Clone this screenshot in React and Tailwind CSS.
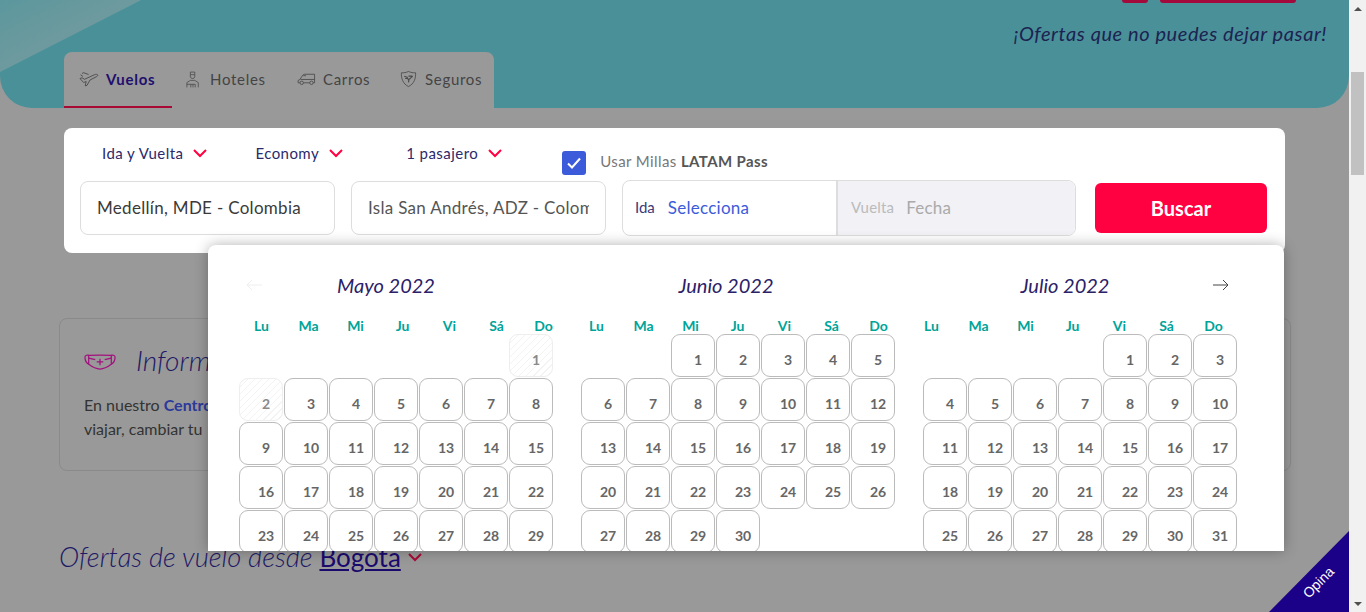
import React from 'react';

const font = "font-['Lato','Open_Sans',sans-serif]";
const weekdays = ['Lu', 'Ma', 'Mi', 'Ju', 'Vi', 'Sá', 'Do'];

// May stops at 29: the last row is below the fold of the popover
const months = [
    { title: 'Mayo 2022', days: 29, start: 6, disabled: [1, 2], titleClass: 'w-[294px]', weekClass: '-ml-[1px]' },
    { title: 'Junio 2022', days: 30, start: 2, disabled: [], titleClass: 'w-[290px]', weekClass: '-ml-[8px]' },
    { title: 'Julio 2022', days: 31, start: 4, disabled: [], titleClass: 'w-[284px]', weekClass: '-ml-[15px]' },
];

function Chevron({ className }) {
    return (
        <svg viewBox="0 0 16 10" className={className} fill="none" stroke="currentColor" strokeWidth="2">
            <path d="M2 2l6 6 6-6" />
        </svg>
    );
}

function PlaneIcon() {
    return (
        <svg viewBox="0 0 20 16" className="w-[20px] h-[16px] text-[#4a4a4a]" fill="none" stroke="currentColor" strokeWidth="0.9">
            <path d="M1 7.5l2-.8 2.5 1.6 10-4.6c1.400-.6 3-.4 3.300.3.2.6-.5 1.200-1.600 1.800L11 9l-3 5.400-1.800.5 1-4.400-2.600 1-3.600-4z" />
            <path d="M3 2.500l1.600-.8 5 1.800M1.500 3.800l2.400 1.600" />
        </svg>
    );
}

function BellboyIcon() {
    return (
        <svg viewBox="0 0 16 20" className="w-[14px] h-[19px] text-[#4a4a4a]" fill="none" stroke="currentColor" strokeWidth="0.9">
            <path d="M5 1.500h5v3H5zM5 4.500v2.500a2.600 2.600 0 005 0V4.500" />
            <path d="M1 19v-5.500L5 11h5l4 2.500V19M1 15.500h9.500v3.500M5.500 15.500V19M8 15.500V19" />
        </svg>
    );
}

function CarIcon() {
    return (
        <svg viewBox="0 0 20 14" className="w-[19px] h-[14px] text-[#4a4a4a]" fill="none" stroke="currentColor" strokeWidth="0.9">
            <path d="M3 11H1.200V8.500L3 7.600 6 3c.4-.6 1-1 1.800-1H18.500v9H17M7 11h6.500" />
            <path d="M3.800 7.500h14.700M6.500 3.500h3" />
            <circle cx="5" cy="11" r="1.800" />
            <circle cx="15.200" cy="11" r="1.800" />
        </svg>
    );
}

function ShieldIcon() {
    return (
        <svg viewBox="0 0 18 18" className="w-[17px] h-[18px] text-[#4a4a4a]" fill="none" stroke="currentColor" strokeWidth="0.9">
            <path d="M9 1c2.400 1.200 5 1.600 7.500 1.400.4 5.800-1.600 11.800-7.500 14.600C3.100 14.200 1.100 8.200 1.500 2.400 4 2.600 6.600 2.200 9 1z" />
            <path d="M4.500 6l3 1.200L9 10l4.500-4M5.500 8.500h3M9 6h4M9.500 9.500l-.5 3" strokeWidth="1.200" />
        </svg>
    );
}

function MaskIcon() {
    return (
        <svg viewBox="0 0 34 20" className="mt-[3px] w-[32px] h-[19px] text-[#a3107e]" fill="none" stroke="currentColor" strokeWidth="1.300">
            <path d="M5 3.500c8-.3 16-.3 24 0V13c-4 3-8 5-12 5s-8-2-12-5z" />
            <path d="M5 3.500C2.500 3 1 3.500 1 5.500c0 3 1.500 6 4 7.500M29 3.500c2.500-.5 4 0 4 2 0 3-1.500 6-4 7.500" />
            <path d="M5 6.500l7 1.500M29 6.500l-7 1.500M17 7v7M13.500 10.500h7" />
        </svg>
    );
}

function Tab({ icon, label, active, className }) {
    return (
        <div className={`flex items-center h-full border-b-2 ${active ? 'border-[#a80a35]' : 'border-transparent'} ${className}`}>
            {icon}
            <span className={`text-[15px] tracking-[0.7px] ${active ? 'font-bold text-[#1f0f6e] ml-[7px]' : 'text-[#444444]'}`}>{label}</span>
        </div>
    );
}

function Select({ label, className }) {
    return (
        <div className={`flex items-center text-[15px] tracking-[0.45px] text-[#2b2a6b] ${className}`}>
            <span className="whitespace-nowrap">{label}</span>
            <Chevron className="ml-[9px] w-[16px] h-[10px] text-[#ff0040]" />
        </div>
    );
}

function Month({ month }) {
    const cells = [];
    for (let i = 0; i < month.start; i++) cells.push(<div key={`b${i}`} />);
    for (let d = 1; d <= month.days; d++) {
        const off = month.disabled.includes(d);
        cells.push(
            <div
                key={d}
                className={`flex items-center justify-center pl-[10px] pt-[7px] rounded-[9px] border text-[14px] font-bold ${
                    off
                        ? 'border-[#eeeeee] text-[#8a8a8a] bg-[repeating-linear-gradient(135deg,#f3f3f3_0px,#f3f3f3_1px,#ffffff_1px,#ffffff_5px)]'
                        : 'border-[#bbbbbb] text-[#666666]'
                }`}
            >
                {d}
            </div>
        );
    }
    return (
        <div className="w-[315px] shrink-0">
            <div className={`${month.titleClass} h-[24px] text-center text-[20px] italic text-[#2b2168] leading-[24px]`}>{month.title}</div>
            <div className={`${month.weekClass} mt-[20px] grid grid-cols-[repeat(7,47px)] h-[18px]`}>
                {weekdays.map((w) => (
                    <div key={w} className="text-center text-[14px] font-bold text-[#00a499] leading-[18px]">{w}</div>
                ))}
            </div>
            <div className="mt-[-1px] grid grid-cols-[repeat(7,44px)] auto-rows-[43px] gap-x-[1px] gap-y-[1px]">
                {cells}
            </div>
        </div>
    );
}

function Calendar() {
    return (
        <div className="absolute z-20 left-[208px] top-[245px] w-[1076px] h-[306px] overflow-hidden bg-white rounded-t-[8px] shadow-[0_0_14px_rgba(0,0,0,0.3)]">
            <div className="flex gap-[27px] pl-[31px] pt-[28px]">
                {months.map((m) => (
                    <Month key={m.title} month={m} />
                ))}
            </div>
            <svg viewBox="0 0 16 12" className="absolute left-[38px] top-[34px] w-[16px] h-[12px] text-[#eeeeee]" fill="none" stroke="currentColor" strokeWidth="1">
                <path d="M16 6H1M6 1L1 6l5 5" />
            </svg>
            <svg viewBox="0 0 16 12" className="absolute left-[1005px] top-[34px] w-[16px] h-[12px] text-[#444444]" fill="none" stroke="currentColor" strokeWidth="1">
                <path d="M0 6h15M10 1l5 5-5 5" />
            </svg>
        </div>
    );
}

function Scrollbar() {
    return (
        <div className="w-[17px] shrink-0 h-full bg-[#f1f1f1] flex flex-col items-center">
            <div className="h-[17px] flex items-center justify-center">
                <div className="w-0 h-0 border-x-[4px] border-x-transparent border-b-[4px] border-b-[#505050]" />
            </div>
            <div className="mt-[55px] w-[13px] h-[103px] bg-[#c1c1c1]" />
            <div className="mt-auto h-[17px] flex items-center justify-center">
                <div className="w-0 h-0 border-x-[4px] border-x-transparent border-t-[4px] border-t-[#505050]" />
            </div>
        </div>
    );
}

export default function App() {
    return (
        <div className={`${font} flex h-screen w-full overflow-hidden bg-[#999999]`}>
            <div className="relative flex-1 min-w-0">
                {/* hero */}
                <div className="relative h-[108px] overflow-hidden rounded-b-[32px] bg-[#4a9099] flex justify-between">
                    <div className="absolute -left-[73px] -top-[17px] w-[220px] h-[66px] rotate-[-27deg] rounded-[12px] bg-linear-to-b from-[#5a979d] to-[#6e9a9e]" />
                    <div className="relative ml-[64px] mt-[52px] w-[430px] h-[56px] rounded-t-[8px] bg-[#999999] flex">
                        <Tab active icon={<PlaneIcon />} label="Vuelos" className="w-[108px] pl-[15px]" />
                        <Tab icon={<BellboyIcon />} label={<span className="ml-[10px]">Hoteles</span>} className="ml-[14px] w-[111px]" />
                        <Tab icon={<CarIcon />} label={<span className="ml-[7px]">Carros</span>} className="w-[103px]" />
                        <Tab icon={<ShieldIcon />} label={<span className="ml-[8px]">Seguros</span>} />
                    </div>
                    <div className="relative pr-[22px] flex flex-col items-end">
                        <div className="flex gap-[12px] mr-[31px]">
                            <div className="w-[26px] h-[3px] rounded-b-[3px] bg-[#a3093a]" />
                            <div className="w-[136px] h-[3px] rounded-b-[3px] bg-[#a3093a]" />
                        </div>
                        <div className="mt-[17px] text-[20px] italic tracking-[0.58px] leading-[26px] text-[#1c2350]">¡Ofertas que no puedes dejar pasar!</div>
                    </div>
                </div>

                {/* search */}
                <div className="mt-[20px] ml-[64px] w-[1221px] h-[125px] rounded-[8px] bg-white relative">
                    <div className="flex items-start h-[52px]">
                        <Select label="Ida y Vuelta" className="ml-[38px] mt-[14px]" />
                        <Select label="Economy" className="ml-[47px] mt-[14px]" />
                        <Select label="1 pasajero" className="ml-[62px] mt-[14px]" />
                        <div className="ml-[59px] mt-[23px] w-[24px] h-[24px] rounded-[3px] bg-[#3b5bdb] flex items-center justify-center">
                            <svg viewBox="0 0 16 16" className="w-[16px] h-[16px]" fill="none" stroke="#ffffff" strokeWidth="2">
                                <path d="M2 8.500l4 4 8-9" />
                            </svg>
                        </div>
                        <div className="ml-[14px] mt-[24px] text-[15px] tracking-[0.4px] leading-[18px] text-[#777777] whitespace-nowrap">
                            Usar Millas <span className="font-bold text-[#555555]">LATAM Pass</span>
                        </div>
                    </div>
                    <div className="flex items-center pl-[16px]">
                        <div className="w-[255px] h-[54px] rounded-[8px] border border-[#dddddd] flex items-center px-[16px] pb-[1px] text-[17px] tracking-[0.3px] text-[#3a3a3a] whitespace-nowrap overflow-hidden">
                            Medellín, MDE - Colombia
                        </div>
                        <div className="ml-[16px] w-[255px] h-[54px] rounded-[8px] border border-[#dddddd] flex items-center px-[16px] pb-[1px] text-[17px] tracking-[0.3px] text-[#555555]">
                            <span className="block overflow-hidden whitespace-nowrap">Isla San Andrés, ADZ - Colombia</span>
                        </div>
                        <div className="ml-[16px] w-[454px] h-[56px] rounded-[8px] border border-[#dddddd] flex overflow-hidden">
                            <div className="w-[215px] flex items-center pl-[12px] pb-[1px] border-r-2 border-[#dddddd]">
                                <span className="text-[15px] text-[#3b3a78]">Ida</span>
                                <span className="ml-[13px] text-[17px] tracking-[0.25px] text-[#3b5bdb]">Selecciona</span>
                            </div>
                            <div className="flex-1 flex items-center pl-[13px] pb-[1px] bg-[#f1f1f6]">
                                <span className="text-[15px] tracking-[0.2px] text-[#bbbbbb]">Vuelta</span>
                                <span className="ml-[12px] text-[17px] tracking-[0.2px] text-[#aaaaaa]">Fecha</span>
                            </div>
                        </div>
                        <div className="ml-[19px] w-[172px] h-[50px] rounded-[6px] bg-[#ff0040] flex items-center justify-center text-[20px] font-bold text-white">
                            Buscar
                        </div>
                    </div>
                </div>

                {/* info card, mostly covered by the calendar */}
                <div className="mt-[65px] ml-[59px] w-[1232px] h-[153px] rounded-[8px] border border-[#8a8a8a] pl-[24px] overflow-hidden">
                    <div className="flex items-center mt-[24px]">
                        <MaskIcon />
                        <span className="ml-[20px] text-[28px] leading-[34px] italic font-light text-[#1f1a66]">Información</span>
                    </div>
                    <p className="mt-[16px] text-[16px] leading-[24px] text-[#333333]">
                        En nuestro <b className="text-[#2b3a9b]">Centro</b>
                        <br />
                        viajar, cambiar tu
                    </p>
                </div>

                {/* offers */}
                <div className="mt-[68px] ml-[59px] flex items-center">
                    <span className="text-[27.3px] leading-[36px] italic font-light text-[#1f1a66]">
                        Ofertas de vuelo desde <span className="underline not-italic font-normal text-[26px] text-[#1a0a6e]">Bogotá</span>
                    </span>
                    <Chevron className="ml-[6px] w-[16px] h-[10px] text-[#a80a35]" />
                </div>

                <Calendar />

                {/* corner ribbon */}
                <div className="absolute right-0 bottom-0 z-30 w-[80px] h-[81px] bg-[#1b0088] [clip-path:polygon(100%_0,100%_100%,0_100%)] overflow-hidden">
                    <span className="absolute left-[31px] top-[41px] rotate-[-45deg] font-['Liberation_Sans',sans-serif] text-[14px] text-white">Opina</span>
                </div>
            </div>
            <Scrollbar />
        </div>
    );
}
